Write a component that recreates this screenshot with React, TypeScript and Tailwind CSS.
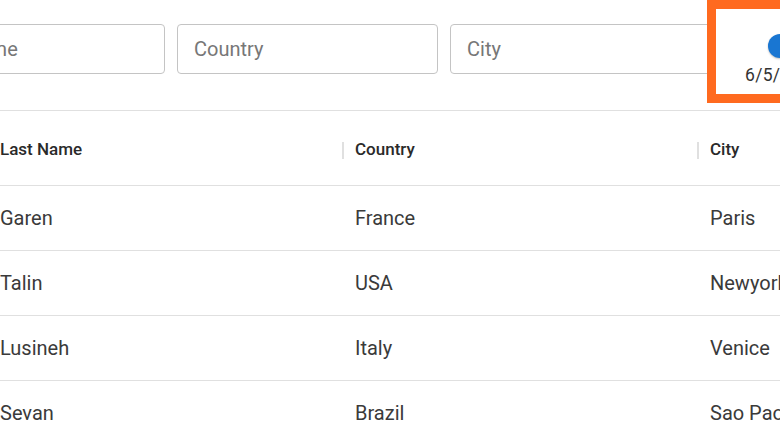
import React from "react";

type Person = {
  lastName: string;
  country: string;
  city: string;
};

const rows: Person[] = [
  { lastName: "Garen", country: "France", city: "Paris" },
  { lastName: "Talin", country: "USA", city: "Newyork" },
  { lastName: "Lusineh", country: "Italy", city: "Venice" },
  { lastName: "Sevan", country: "Brazil", city: "Sao Paolo" },
];

const filters = ["Last Name", "Country", "City"];
const headers = ["Last Name", "Country", "City"];

export default function App() {
  return (
    <div className="relative w-[780px] h-[441px] overflow-hidden bg-white font-['Roboto',sans-serif]">
      {/* Filters */}
      <div className="h-[111px] border-b border-[#e0e0e0]">
        <div className="flex gap-3 pt-[24px] -ml-[96px]">
          {filters.map((f) => (
            <input
              key={f}
              placeholder={f}
              className="w-[261px] h-[50px] shrink-0 rounded border border-[#c4c4c4] px-[16px] text-[20px] text-[#333] placeholder:text-[#777] outline-none"
            />
          ))}
          <div className="shrink-0 w-[120px] pl-[22px] pt-[10px] flex flex-col">
            <div className="ml-[23px] w-[24px] h-[24px] rounded-full bg-[#1976d2] shadow-[0_1px_2px_rgba(0,0,0,0.25)]" />
            <div className="mt-[7px] text-[17.5px] leading-[20px] tracking-[0.3px] text-[#333] whitespace-nowrap">
              6/5/2021
            </div>
          </div>
        </div>
      </div>

      {/* Header */}
      <div className="flex h-[75px] pt-[4px] border-b border-[#e0e0e0] text-[17px] font-medium text-[#2a2a2a]">
        {headers.map((h, i) => (
          <div key={h} className="w-[355px] shrink-0 flex items-center">
            <span>{h}</span>
            {i < headers.length - 1 && (
              <span className="ml-auto mr-[11px] w-[2px] h-[17px] bg-[#e0e0e0]" />
            )}
          </div>
        ))}
      </div>

      {/* Rows */}
      {rows.map((r) => (
        <div
          key={r.lastName}
          className="flex h-[65px] border-b border-[#e0e0e0] text-[20px] text-[#3a3a3a]"
        >
          <div className="w-[355px] shrink-0 flex items-center">{r.lastName}</div>
          <div className="w-[355px] shrink-0 flex items-center">{r.country}</div>
          <div className="w-[355px] shrink-0 flex items-center whitespace-nowrap">{r.city}</div>
        </div>
      ))}

      {/* highlight */}
      <div className="absolute left-[707px] top-0 w-[110px] h-[103px] border-[9px] border-[#ff6a1f] pointer-events-none" />
    </div>
  );
}
